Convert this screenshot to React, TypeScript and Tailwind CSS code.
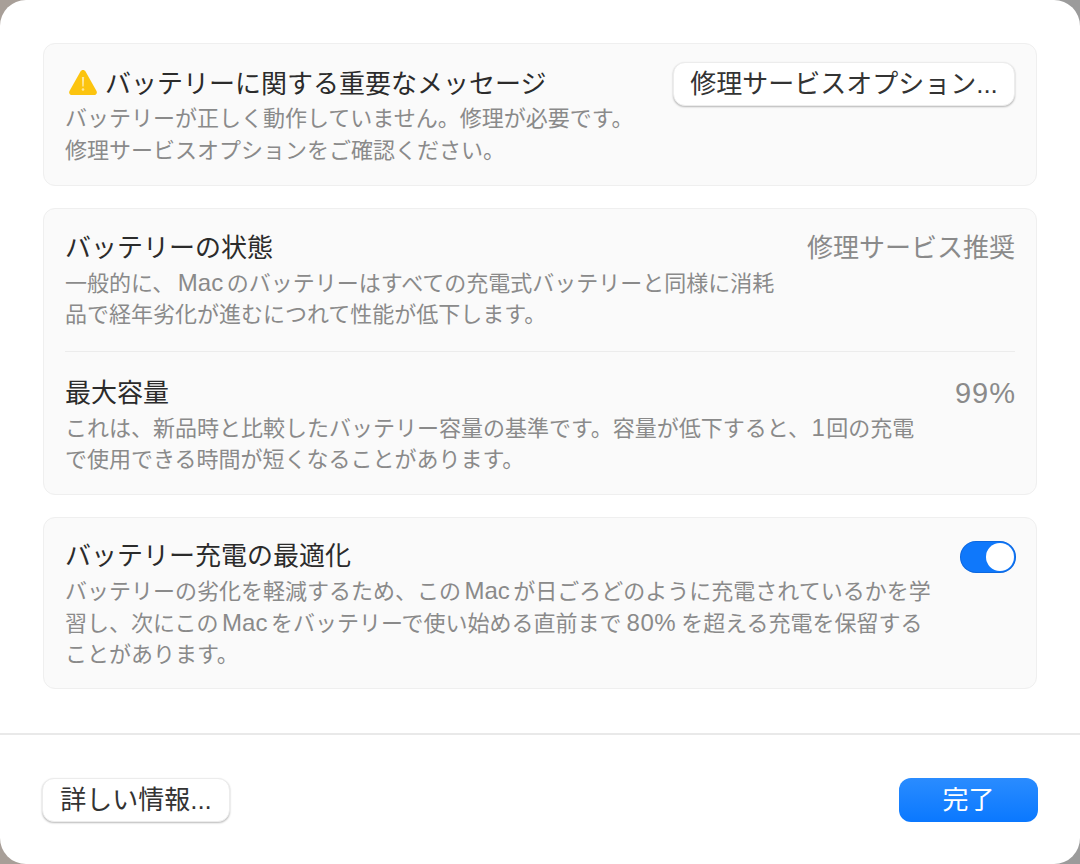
import type { ReactNode } from "react";

const font = "font-['Liberation_Sans','Noto_Sans_CJK_JP',sans-serif]";

function Title({ children }: { children: ReactNode }) {
  return <div className="text-[26px] leading-[32px] text-[#2b2b2b]">{children}</div>;
}

function Body({ lines, leading = "leading-[31px]" }: { lines: ReactNode[]; leading?: string }) {
  return (
    <div className={`text-[22px] text-[#8a8a8a] ${leading}`}>
      {lines.map((line, i) => (
        <div key={i} className="whitespace-nowrap">
          {line}
        </div>
      ))}
    </div>
  );
}

function Mac() {
  return <span className="mx-[3.5px] text-[24px]">Mac</span>;
}

function Card({ children }: { children: ReactNode }) {
  return (
    <section className="rounded-[12px] border border-[#efefef] bg-[#fafafa] px-[21px]">
      {children}
    </section>
  );
}

function PlainButton({ label, className }: { label: string; className: string }) {
  return (
    <button
      className={`h-[44px] rounded-[12px] border border-[#ececec] bg-white text-[26px] leading-none text-[#333333] shadow-[0_1px_2px_rgba(0,0,0,0.28)] ${className}`}
    >
      {label}
    </button>
  );
}

function WarningIcon() {
  return (
    <svg width="30" height="27" viewBox="0 0 30 27" className="mb-[4px] shrink-0">
      <path
        d="M15 1c1 0 1.900.5 2.500 1.500l11 19.500c1 1.900-.2 4-2.400 4H3.900c-2.200 0-3.400-2.100-2.400-4l11-19.500C13.100 1.500 14 1 15 1z"
        fill="#fcc40f"
      />
      <path d="M13.900 8h2.200l-.4 9.500h-1.400z" fill="#ffffff" opacity="0.6" />
      <circle cx="15" cy="20.500" r="1.300" fill="#ffffff" opacity="0.6" />
    </svg>
  );
}

export default function App() {
  return (
    <div className={`h-[864px] w-[1080px] bg-[linear-gradient(90deg,#a89f98,#9b9b9b)] ${font}`}>
      <div className="flex h-full flex-col rounded-[26px] bg-white">
        <main className="flex flex-col gap-[22px] px-[43px] pt-[43px]">
          <Card>
            <div className="flex h-[141px] items-start justify-between pt-[24px]">
              <div>
                <div className="flex items-center gap-[7px] pl-[3px]">
                  <WarningIcon />
                  <Title>バッテリーに関する重要なメッセージ</Title>
                </div>
                <div className="mt-[3px]">
                  <Body
                    leading="leading-[32px]"
                    lines={["バッテリーが正しく動作していません。修理が必要です。", "修理サービスオプションをご確認ください。"]}
                  />
                </div>
              </div>
              <PlainButton label="修理サービスオプション..." className="-mt-[6px] w-[342px]" />
            </div>
          </Card>

          <Card>
            <div className="flex h-[143px] items-start justify-between border-b border-[#ececec] pt-[23px]">
              <div>
                <Title>バッテリーの状態</Title>
                <div className="mt-[3px]">
                  <Body
                    lines={[
                      <>
                        一般的に、
                        <Mac />
                        のバッテリーはすべての充電式バッテリーと同様に消耗
                      </>,
                      "品で経年劣化が進むにつれて性能が低下します。",
                    ]}
                  />
                </div>
              </div>
              <div className="text-[26px] leading-[32px] text-[#8a8a8a]">修理サービス推奨</div>
            </div>
            <div className="flex h-[142px] items-start justify-between pt-[25px]">
              <div>
                <Title>最大容量</Title>
                <div className="mt-[3px]">
                  <Body
                    lines={[
                      <>
                        これは、新品時と比較したバッテリー容量の基準です。容量が低下すると、
                        <span className="mx-[1.5px] text-[24px]">1</span>
                        回の充電
                      </>,
                      "で使用できる時間が短くなることがあります。",
                    ]}
                  />
                </div>
              </div>
              <div className="-mr-[1px] text-[29px] leading-[32px] tracking-[1px] text-[#8a8a8a]">99%</div>
            </div>
          </Card>

          <Card>
            <div className="flex h-[170px] items-start justify-between pt-[22px]">
              <div>
                <Title>バッテリー充電の最適化</Title>
                <div className="mt-[3px]">
                  <Body
                    lines={[
                      <>
                        バッテリーの劣化を軽減するため、この
                        <Mac />
                        が日ごろどのように充電されているかを学
                      </>,
                      <>
                        習し、次にこの
                        <Mac />
                        をバッテリーで使い始める直前まで
                        <span className="mx-[5px] text-[24px] tracking-[0.5px]">80%</span>
                        を超える充電を保留する
                      </>,
                      "ことがあります。",
                    ]}
                  />
                </div>
              </div>
              <div className="-mr-[1px] mt-[1px] flex h-[32px] w-[56px] items-center justify-end rounded-full bg-[#0f78fb] p-[2px] shadow-[inset_0_0_0_1px_rgba(0,40,120,0.2)]">
                <div className="h-[28px] w-[28px] rounded-full bg-white" />
              </div>
            </div>
          </Card>
        </main>

        <div className="mt-[44px] h-[2px] bg-[#e9e9e9]" />

        <footer className="flex items-center justify-between px-[42px] pt-[43px]">
          <PlainButton label="詳しい情報..." className="w-[188px]" />
          <button className="h-[44px] w-[139px] rounded-[12px] bg-[linear-gradient(180deg,#2a8cff,#0a78ff)] text-[26px] leading-none text-white">
            完了
          </button>
        </footer>
      </div>
    </div>
  );
}
